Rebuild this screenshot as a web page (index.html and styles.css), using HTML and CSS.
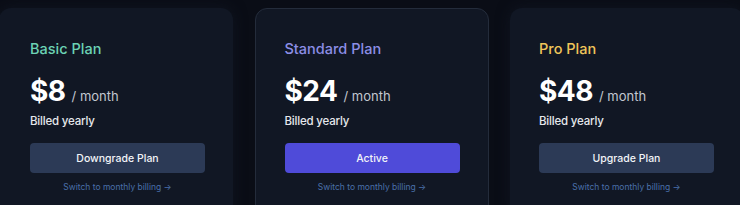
FILE: index.html
```html
<!DOCTYPE html>
<html lang="en">
<head>
    <meta charset="UTF-8">
    <meta name="viewport" content="width=device-width, initial-scale=1.0">
    <title>Plans</title>
    <link rel="stylesheet" href="styles.css">
</head>
<body>
    <div class="plans">
        <div class="plan-card">
            <h3 class="plan-name basic">Basic Plan</h3>
            <div class="price"><span class="amount">$8</span><span class="period">/ month</span></div>
            <div class="billed">Billed yearly</div>
            <button class="plan-button">Downgrade Plan</button>
            <a class="switch-link" href="#">Switch to monthly billing &rarr;</a>
        </div>
        <div class="plan-card current">
            <h3 class="plan-name standard">Standard Plan</h3>
            <div class="price"><span class="amount">$24</span><span class="period">/ month</span></div>
            <div class="billed">Billed yearly</div>
            <button class="plan-button active">Active</button>
            <a class="switch-link" href="#">Switch to monthly billing &rarr;</a>
        </div>
        <div class="plan-card">
            <h3 class="plan-name pro">Pro Plan</h3>
            <div class="price"><span class="amount">$48</span><span class="period">/ month</span></div>
            <div class="billed">Billed yearly</div>
            <button class="plan-button">Upgrade Plan</button>
            <a class="switch-link" href="#">Switch to monthly billing &rarr;</a>
        </div>
    </div>
</body>
</html>
```

FILE: styles.css
```css
:root {
    --bg-color: #0a0d16; --card-bg: #111724; --border-color: #242c3b;
    --text-color: #e6e8ec; --muted: #c2c7d0; --button-bg: #2c3a56;
    --active-bg: #4f4bd9; --link-color: #4a70aa;
}
body {
    font-family: Inter, "Open Sans", sans-serif;
    background-color: var(--bg-color); color: var(--text-color);
    margin: 0; height: 205px; overflow: hidden;
}
.plans { display: flex; gap: 21.5px; padding-top: 8px; margin-left: -1px; }
.plan-card {
    flex: 0 0 234px; min-width: 0; box-sizing: border-box; height: 210px;
    padding: 31px 0 0 30px; background-color: var(--card-bg);
    border: 1px solid transparent; border-radius: 12px;
    box-shadow: 0 0 14px rgba(20, 26, 40, 0.6);
    display: flex; flex-direction: column; align-items: flex-start;
}
.plan-card.current { border-color: var(--border-color); padding-left: 29px; box-shadow: none; }
.plan-card:last-child { padding-left: 28px; }
.plan-name { margin: 0; font-size: 14.5px; font-weight: 500; line-height: 18px; }
.plan-name.basic { color: #6cd3b4; }
.plan-name.standard { color: #8c8ee6; }
.plan-name.pro { color: #efc55a; }
.price { margin-top: 17px; line-height: 32px; height: 32px; white-space: nowrap; }
.amount { font-size: 28px; font-weight: 700; color: #fff; letter-spacing: -0.5px; }
.period { font-size: 13px; color: var(--muted); margin-left: 6px; }
.billed { font-size: 11.5px; font-weight: 500; margin-top: 5px; line-height: 18px; letter-spacing: -0.2px; }
.plan-button {
    margin-top: 13px; height: 30px; width: 175px;
    font-family: inherit; font-size: 10.5px; font-weight: 500; color: #f2f4f8;
    background-color: var(--button-bg); border: none; border-radius: 4px;
}
.plan-button.active { background-color: var(--active-bg); }
.switch-link {
    margin-top: 8px; width: 175px; text-align: center; line-height: 12px;
    font-size: 8.5px; color: var(--link-color); text-decoration: none;
}
```
